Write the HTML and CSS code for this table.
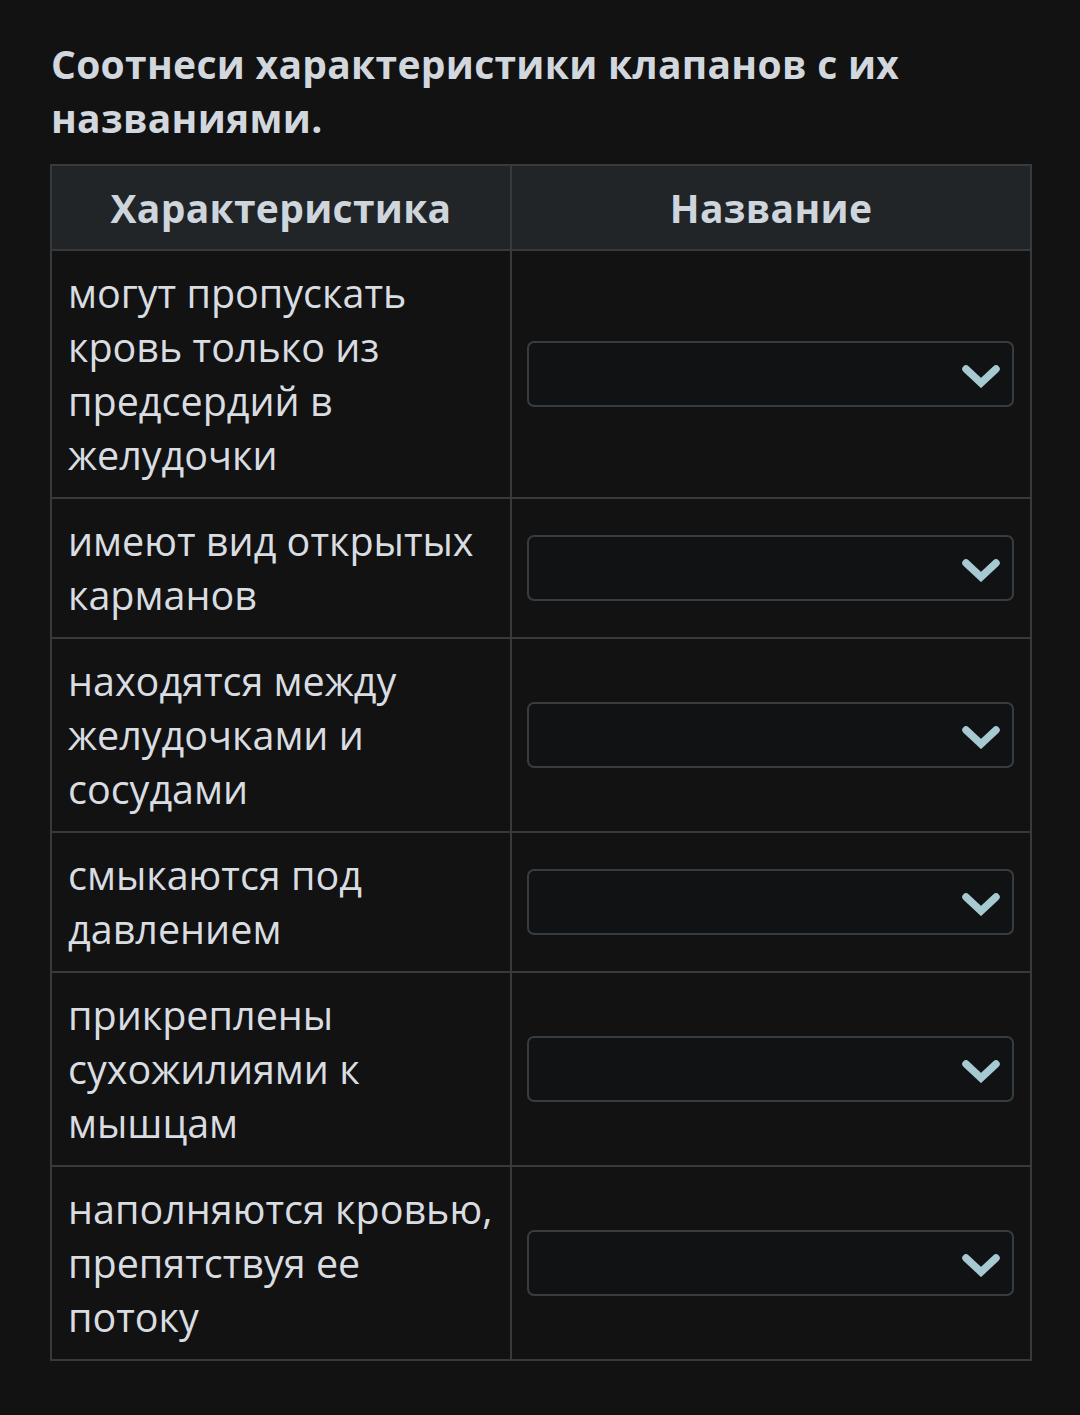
FILE: index.html
```html
<!DOCTYPE html>
<html lang="ru">
<head>
<meta charset="utf-8">
<title>Соотнеси характеристики</title>
<link rel="stylesheet" href="styles.css">
</head>
<body>
<main class="page">
  <h1 class="title">Соотнеси характеристики клапанов с их названиями.</h1>
  <table class="match">
    <colgroup><col class="col-a"><col class="col-b"></colgroup>
    <thead>
      <tr><th>Характеристика</th><th>Название</th></tr>
    </thead>
    <tbody>
      <tr><td class="desc">могут пропускать кровь только из предсердий в желудочки</td><td class="pick"><div class="select"><svg class="chev" viewBox="0 0 40 24"><path d="M5 5 L20 19 L35 5"/></svg></div></td></tr>
      <tr><td class="desc">имеют вид открытых карманов</td><td class="pick"><div class="select"><svg class="chev" viewBox="0 0 40 24"><path d="M5 5 L20 19 L35 5"/></svg></div></td></tr>
      <tr><td class="desc">находятся между желудочками и сосудами</td><td class="pick"><div class="select"><svg class="chev" viewBox="0 0 40 24"><path d="M5 5 L20 19 L35 5"/></svg></div></td></tr>
      <tr><td class="desc">смыкаются под давлением</td><td class="pick"><div class="select"><svg class="chev" viewBox="0 0 40 24"><path d="M5 5 L20 19 L35 5"/></svg></div></td></tr>
      <tr><td class="desc">прикреплены сухожилиями к мышцам</td><td class="pick"><div class="select"><svg class="chev" viewBox="0 0 40 24"><path d="M5 5 L20 19 L35 5"/></svg></div></td></tr>
      <tr><td class="desc">наполняются кровью, препятствуя ее потоку</td><td class="pick"><div class="select"><svg class="chev" viewBox="0 0 40 24"><path d="M5 5 L20 19 L35 5"/></svg></div></td></tr>
    </tbody>
  </table>
</main>
</body>
</html>
```
FILE: styles.css
```css
html, body {
  margin: 0;
  padding: 0;
  background: #121212;
}
body {
  font-family: "Open Sans", "Noto Sans", sans-serif;
  color: #d9dde1;
}
.page {
  padding: 37px 49px 40px 50px;
}
.title {
  margin: 0 0 19px 1px;
  font-size: 39px;
  line-height: 54px;
  font-weight: 700;
  color: #d2d7de;
  letter-spacing: 0.3px;
}
.match {
  width: 980px;
  border-collapse: collapse;
  table-layout: fixed;
}
.col-a { width: 460px; }
.col-b { width: 520px; }
.match th, .match td {
  border: 2px solid #363a3d;
}
.match th {
  background: #212528;
  height: 83px;
  padding: 0;
  font-size: 39px;
  line-height: 54px;
  font-weight: 700;
  color: #cfd5dc;
  text-align: center;
  letter-spacing: 0.3px;
}
.desc {
  padding: 15px 14px 15px 16px;
  font-size: 39.5px;
  line-height: 54px;
  font-weight: 400;
  color: #d9dde1;
  vertical-align: top;
}
.pick {
  padding: 0 16px 0 15px;
  vertical-align: middle;
}
.select {
  height: 62px;
  border: 2px solid #373c40;
  border-radius: 7px;
  background: #111213;
  display: flex;
  align-items: center;
  justify-content: flex-end;
  padding-right: 11px;
}
.chev {
  width: 40px;
  height: 24px;
  margin-top: 3px;
  fill: none;
  stroke: #a6c9d2;
  stroke-width: 7.5;
  stroke-linecap: round;
  stroke-linejoin: miter;
}
```
